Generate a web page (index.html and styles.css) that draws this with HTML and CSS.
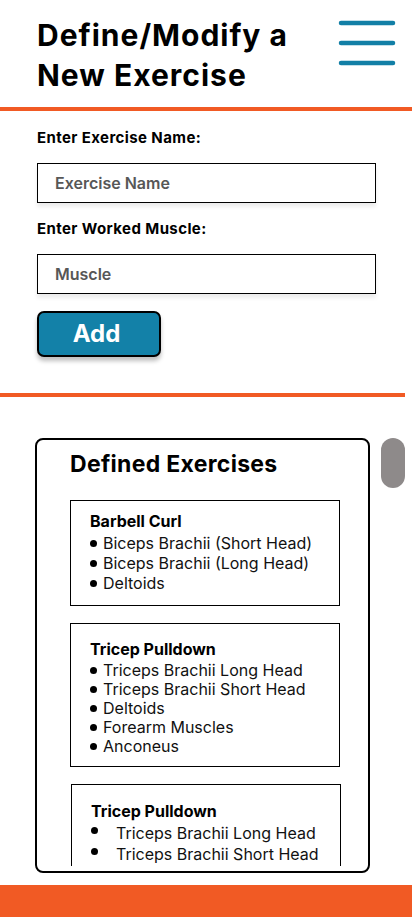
FILE: index.html
```html
<!DOCTYPE html>
<html lang="en">
<head>
<meta charset="utf-8">
<title>Define/Modify a New Exercise</title>
<link rel="stylesheet" href="styles.css">
</head>
<body>
<header class="top">
  <h1 class="title">Define/Modify a<br>New Exercise</h1>
  <button class="menu" type="button" aria-label="Menu">
    <svg width="58" height="50" viewBox="0 0 58 50">
      <line x1="3" y1="4" x2="55" y2="4" />
      <line x1="3" y1="24" x2="55" y2="24" />
      <line x1="3" y1="44" x2="55" y2="44" />
    </svg>
  </button>
</header>
<div class="rule"></div>
<form class="form">
  <label class="label" for="ex-name">Enter Exercise Name:</label>
  <input class="field" id="ex-name" type="text" placeholder="Exercise Name">
  <label class="label" for="ex-muscle">Enter Worked Muscle:</label>
  <input class="field" id="ex-muscle" type="text" placeholder="Muscle">
  <button class="add" type="button">Add</button>
</form>
<div class="rule rule-short"></div>
<section class="list-wrap">
  <div class="card">
    <div class="card-scroll">
      <h2 class="card-title">Defined Exercises</h2>
      <div class="ex ex-1">
        <h3 class="ex-name">Barbell Curl</h3>
        <ul class="muscles">
          <li>Biceps Brachii (Short Head)</li>
          <li>Biceps Brachii (Long Head)</li>
          <li>Deltoids</li>
        </ul>
      </div>
      <div class="ex ex-2">
        <h3 class="ex-name">Tricep Pulldown</h3>
        <ul class="muscles muscles-tight">
          <li>Triceps Brachii Long Head</li>
          <li>Triceps Brachii Short Head</li>
          <li>Deltoids</li>
          <li>Forearm Muscles</li>
          <li>Anconeus</li>
        </ul>
      </div>
      <div class="ex ex-3">
        <h3 class="ex-name">Tricep Pulldown</h3>
        <ul class="muscles muscles-wide">
          <li>Triceps Brachii Long Head</li>
          <li>Triceps Brachii Short Head</li>
          <li>Deltoids</li>
        </ul>
      </div>
    </div>
  </div>
  <div class="thumb"></div>
</section>
<footer class="bottom-bar"></footer>
</body>
</html>
```
FILE: styles.css
```css
* { box-sizing: border-box; }
html, body { margin: 0; padding: 0; }
body {
  width: 412px;
  height: 917px;
  overflow: hidden;
  background: #fff;
  color: #000;
  font-family: Inter, "Noto Sans", "Liberation Sans", sans-serif;
}

.top {
  display: flex;
  justify-content: space-between;
  align-items: flex-start;
  padding: 15px 16px 12px 37px;
}
.title {
  margin: 0;
  font-size: 30px;
  line-height: 40px;
  font-weight: 700;
  letter-spacing: 1px;
}
.menu {
  border: 0;
  padding: 0;
  margin: 4px 0 0 0;
  background: none;
  width: 58px;
  height: 50px;
}
.menu svg { display: block; }
.menu line {
  stroke: #127fa6;
  stroke-width: 4.5;
  stroke-linecap: round;
}

.rule {
  height: 4px;
  background: #f15a24;
  width: 412px;
}
.rule-short { width: 405px; }

.form {
  display: flex;
  flex-direction: column;
  align-items: flex-start;
  padding: 18px 36px 36px 37px;
}
.label {
  font-size: 15px;
  line-height: 18px;
  font-weight: 700;
  letter-spacing: 0.4px;
  margin-bottom: 16px;
}
.field {
  width: 339px;
  height: 40px;
  border: 1.6px solid #000;
  border-radius: 0;
  padding: 0 0 0 17px;
  font-family: inherit;
  font-size: 16px;
  font-weight: 600;
  color: #333;
  background: #fff;
  box-shadow: 0 4px 4px rgba(0, 0, 0, 0.08);
  margin-bottom: 17px;
  outline: none;
}
.field::placeholder {
  color: #575757;
  font-weight: 600;
}
.add {
  width: 124px;
  height: 46px;
  background: #1381a8;
  color: #fff;
  border: 2px solid #000;
  border-radius: 7px;
  font-family: inherit;
  font-size: 24px;
  font-weight: 700;
  padding: 0 5px 2px 0;
  box-shadow: 0 4px 4px rgba(0, 0, 0, 0.25);
}

.list-wrap {
  display: flex;
  align-items: flex-start;
  padding: 41px 0 12px 35px;
}
.card {
  width: 335px;
  height: 435px;
  border: 2px solid #000;
  border-radius: 8px;
  padding: 10px 0 5px 33px;
  display: flex;
  flex-direction: column;
}
.card-scroll {
  flex: 1;
  min-height: 0;
  overflow: hidden;
}
.card-title {
  margin: 0 0 22px 0;
  font-size: 23px;
  line-height: 28px;
  font-weight: 700;
  letter-spacing: 0.3px;
}
.thumb {
  width: 24px;
  height: 50px;
  margin-left: 11px;
  border-radius: 12px;
  background: #8e8a8a;
}

.ex {
  width: 270px;
  border: 1px solid #000;
  padding: 10px 0 12px 19px;
  margin-bottom: 17px;
}
.ex-2 { padding-top: 15px; padding-bottom: 10px; }
.ex-3 { padding-top: 16px; margin-left: 1px; }
.ex-name {
  margin: 0;
  font-size: 16px;
  line-height: 20px;
  font-weight: 700;
}
.muscles {
  list-style: none;
  margin: 2px 0 0 0;
  padding: 0;
  font-size: 16px;
  line-height: 20px;
  color: #111;
}
.muscles li {
  display: flex;
  align-items: center;
  gap: 6px;
}
.muscles li::before {
  content: "";
  width: 7px;
  height: 7px;
  border-radius: 50%;
  background: #000;
  flex: none;
}
.muscles-tight { line-height: 19px; }
.muscles-wide { line-height: 21px; }
.muscles-wide li { gap: 18px; }
.muscles-wide li::before { margin-top: -6px; }

.bottom-bar {
  height: 32px;
  background: #f15a24;
}
```
